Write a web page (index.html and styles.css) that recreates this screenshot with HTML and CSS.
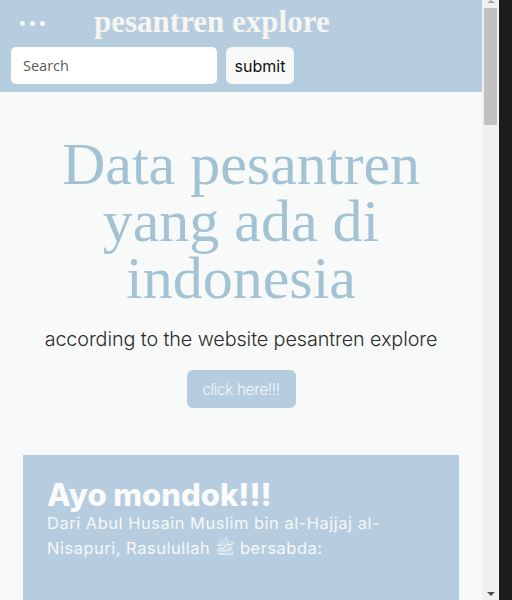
FILE: index.html
```html
<!DOCTYPE html>
<html>
<head>
<meta charset="utf-8">
<link rel="stylesheet" href="styles.css">
</head>
<body>
<div class="window">
  <div class="page">
    <header class="topbar">
      <div class="brand-row">
        <div class="dots"><span></span><span></span><span></span></div>
        <div class="brand">pesantren explore</div>
      </div>
      <form class="search-row">
        <input class="search" type="text" placeholder="Search">
        <button class="submit" type="button">submit</button>
      </form>
    </header>
    <main class="hero">
      <h1 class="hero-title">Data pesantren yang ada di indonesia</h1>
      <p class="hero-sub">according to the website pesantren explore</p>
      <button class="cta" type="button">click here!!!</button>
      <section class="card">
        <h2 class="card-title">Ayo mondok!!!</h2>
        <p class="card-text">Dari Abul Husain Muslim bin al-Hajjaj al-Nisapuri, Rasulullah ﷺ bersabda:</p>
      </section>
    </main>
  </div>
  <div class="scrollbar">
    <div class="arrow up"></div>
    <div class="thumb"></div>
    <div class="track"></div>
    <div class="arrow down"></div>
  </div>
  <div class="edge"></div>
</div>
</body>
</html>
```
FILE: styles.css
```css
html, body {
  margin: 0;
  padding: 0;
  height: 600px;
  overflow: hidden;
}
.window {
  display: flex;
  width: 512px;
  height: 600px;
}
.page {
  width: 482px;
  height: 600px;
  overflow: hidden;
  background: #f8fafa;
}
.topbar {
  background: #b5cddf;
  padding: 5px 11px 8px 11px;
}
.brand-row {
  display: flex;
  align-items: center;
  height: 34px;
}
.dots {
  display: flex;
  gap: 5px;
  margin-left: 9px;
  margin-right: 49px;
  margin-top: 2px;
}
.dots span {
  width: 5px;
  height: 5px;
  border-radius: 50%;
  background: #f6f7f6;
}
.brand {
  font-family: "Liberation Serif", serif;
  font-weight: 700;
  font-size: 31px;
  letter-spacing: 0;
  color: #f6f5f0;
  line-height: 34px;
}
.search-row {
  display: flex;
  gap: 9px;
  margin: 8px 0 0 0;
}
.search {
  width: 206px;
  height: 37px;
  box-sizing: border-box;
  border: none;
  border-radius: 5px;
  background: #ffffff;
  padding: 0 12px;
  font-family: "Open Sans", sans-serif;
  font-size: 14.5px;
  outline: none;
}
.search::placeholder {
  color: #5a5a5a;
}
.submit {
  width: 68px;
  height: 37px;
  border: none;
  border-radius: 6px;
  background: #f7f8f8;
  color: #111;
  font-family: "Inter", sans-serif;
  font-size: 16px;
  padding: 0;
}
.hero {
  display: flex;
  flex-direction: column;
  align-items: center;
  padding: 44px 23px 0 23px;
}
.hero-title {
  margin: 0;
  width: 380px;
  text-align: center;
  font-family: "Liberation Serif", serif;
  font-weight: 400;
  font-size: 60px;
  line-height: 57px;
  color: #a3c2d3;
}
.hero-sub {
  margin: 20px 0 0 0;
  font-family: "Inter", sans-serif;
  font-weight: 300;
  font-size: 19.8px;
  color: #2c2c2c;
  letter-spacing: -0.1px;
}
.cta {
  margin-top: 19px;
  width: 109px;
  height: 38px;
  border: none;
  border-radius: 6px;
  background: #b5cddf;
  color: #f4f7f9;
  font-family: "Inter", sans-serif;
  font-weight: 300;
  font-size: 15.5px;
  letter-spacing: -0.4px;
  padding: 0;
}
.card {
  align-self: stretch;
  margin-top: 47px;
  background: #b5cddf;
  padding: 24px 24px 60px 24px;
  height: 200px;
}
.card-title {
  margin: 0;
  font-family: "Inter", sans-serif;
  font-weight: 800;
  font-size: 31px;
  line-height: 32px;
  letter-spacing: 0;
  color: #fbfbfb;
}
.card-text {
  margin: 0;
  width: 345px;
  font-family: "Inter", sans-serif;
  font-weight: 400;
  font-size: 16.5px;
  line-height: 25px;
  letter-spacing: 0.5px;
  color: #f5f8fa;
}
.scrollbar {
  width: 17px;
  height: 600px;
  background: #f0f0f0;
  display: flex;
  flex-direction: column;
  align-items: center;
}
.arrow {
  width: 0;
  height: 0;
  border-left: 4px solid transparent;
  border-right: 4px solid transparent;
}
.arrow.up {
  border-bottom: 3px solid #a3a3a3;
  margin-top: 0;
}
.thumb {
  width: 13px;
  height: 117px;
  margin-top: 5px;
  background: #c1c1c1;
}
.track {
  flex: 1;
}
.arrow.down {
  border-top: 4px solid #505050;
  margin-bottom: 4px;
}
.edge {
  width: 13px;
  height: 600px;
  background: #1c1c1c;
}
```
